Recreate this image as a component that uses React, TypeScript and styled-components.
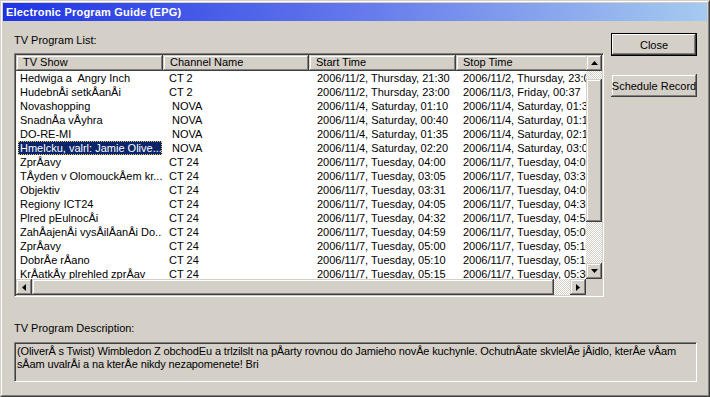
import React from 'react';
import styled, { createGlobalStyle, css } from 'styled-components';

const GlobalStyle = createGlobalStyle`
  html, body { margin: 0; padding: 0; background: #d4d0c8; }
  body { font-family: "Liberation Sans", Arial, sans-serif; font-size: 11px; color: #000; }
  * { box-sizing: border-box; }
`;

const raised = css`
  background: #d4d0c8;
  box-shadow: inset -1px -1px #404040, inset 1px 1px #d4d0c8, inset -2px -2px #808080, inset 2px 2px #ffffff;
`;

const Window = styled.div`
  width: 710px;
  height: 397px;
  background: #d4d0c8;
  border-style: solid;
  border-width: 1px;
  border-color: #d4d0c8 #404040 #404040 #d4d0c8;
  display: flex;
`;

const Frame = styled.div`
  flex: 1;
  display: flex;
  flex-direction: column;
  border-style: solid;
  border-width: 1px;
  border-color: #ffffff #808080 #808080 #ffffff;
  padding: 1px;
`;

const TitleBar = styled.div`
  height: 18px;
  flex: none;
  background: linear-gradient(90deg, #1f33e4 0%, #6478ec 50%, #a6caf0 100%);
  color: #fff;
  font-weight: bold;
  font-size: 11px;
  letter-spacing: 0.2px;
  line-height: 18px;
  padding-left: 3px;
  white-space: nowrap;
`;

const Body = styled.div`
  flex: 1;
  display: flex;
  flex-direction: column;
  padding: 0 10px 0 11px;
`;

const TopRow = styled.div`
  display: flex;
  gap: 7px;
`;

const LeftCol = styled.div`
  width: 590px;
  display: flex;
  flex-direction: column;
`;

const RightCol = styled.div`
  width: 86px;
  display: flex;
  flex-direction: column;
`;

const Label = styled.div<{ $top: number }>`
  margin-top: ${p => p.$top}px;
  line-height: 14px;
  height: 14px;
  white-space: nowrap;
`;

const Button = styled.button<{ $default?: boolean; $top: number }>`
  margin-top: ${p => p.$top}px;
  height: 23px;
  width: 86px;
  padding: 0;
  font-family: "Liberation Sans", Arial, sans-serif;
  font-size: 11px;
  color: #000;
  border: none;
  white-space: nowrap;
  ${raised};
  ${p => p.$default && css`
    box-shadow: inset 0 0 0 1px #000, inset -2px -2px #404040, inset 2px 2px #ffffff, inset -3px -3px #808080;
  `}
`;

const ListFrame = styled.div`
  margin-top: 6px;
  width: 590px;
  height: 244px;
  border-style: solid;
  border-width: 1px;
  border-color: #808080 #ffffff #ffffff #808080;
  box-shadow: inset 1px 1px #404040, inset -1px -1px #d4d0c8;
  padding: 1px;
  background: #fff;
  display: grid;
  grid-template-columns: 570px 16px;
  grid-template-rows: 224px 16px;
`;

const ListContent = styled.div`
  overflow: hidden;
  background: #fff;
`;

const HeaderRow = styled.div`
  display: flex;
  height: 16px;
  width: 600px;
`;

const HeaderCell = styled.div<{ $w: number }>`
  flex: none;
  width: ${p => p.$w}px;
  height: 16px;
  line-height: 15px;
  padding-left: 7px;
  white-space: nowrap;
  overflow: hidden;
  ${raised};
`;

const Row = styled.div`
  display: flex;
  height: 14px;
  line-height: 14px;
  width: 600px;
`;

const Cell = styled.div<{ $w: number; $pad: number }>`
  flex: none;
  width: ${p => p.$w}px;
  padding-left: ${p => p.$pad}px;
  white-space: pre;
  overflow: hidden;
`;

const ShowText = styled.span<{ $selected?: boolean }>`
  display: block;
  width: 144px;
  height: 14px;
  padding-left: 2px;
  white-space: pre;
  overflow: hidden;
  ${p => p.$selected && css`
    background: #0a246a;
    color: #fff;
    outline: 1px dotted #e8c060;
    outline-offset: -1px;
  `}
`;

const ScrollV = styled.div`
  display: flex;
  flex-direction: column;
`;

const ScrollH = styled.div`
  display: flex;
`;

const Track = styled.div<{ $size?: number }>`
  flex: ${p => (p.$size ? `none` : '1')};
  ${p => p.$size !== undefined && css`flex-basis: ${p.$size}px;`}
  background-color: #fff;
  background-image: repeating-conic-gradient(#d4d0c8 0 25%, #ffffff 0 50%);
  background-size: 2px 2px;
`;

const Thumb = styled.div<{ $size: number; $horizontal?: boolean }>`
  flex: none;
  ${p => (p.$horizontal ? css`width: ${p.$size}px;` : css`height: ${p.$size}px;`)}
  ${raised};
`;

const ArrowButton = styled.div`
  flex: none;
  width: 16px;
  height: 16px;
  display: flex;
  align-items: center;
  justify-content: center;
  ${raised};
`;

const Corner = styled.div`
  background: #d4d0c8;
`;

const DescBox = styled.div`
  margin-top: 7px;
  width: 683px;
  height: 40px;
  border-style: solid;
  border-width: 1px;
  border-color: #808080 #ffffff #ffffff #808080;
  box-shadow: inset 1px 1px #404040, inset -1px -1px #d4d0c8;
  padding: 2px 2px 0 2px;
  line-height: 13px;
  letter-spacing: -0.14px;
`;

const DescLine = styled.div`
  white-space: pre;
`;

type Dir = 'up' | 'down' | 'left' | 'right';
const Arrow = ({ dir }: { dir: Dir }) => {
  const pts: Record<Dir, string> = {
    up: '3.5,0 7,4 0,4',
    down: '0,0 7,0 3.5,4',
    left: '4,0 4,7 0,3.5',
    right: '0,0 4,3.5 0,7',
  };
  const vertical = dir === 'up' || dir === 'down';
  return (
    <svg width={vertical ? 7 : 4} height={vertical ? 4 : 7} viewBox={vertical ? '0 0 7 4' : '0 0 4 7'}>
      <polygon points={pts[dir]} fill="#000" />
    </svg>
  );
};

const COLS = [
  { title: 'TV Show', w: 147 },
  { title: 'Channel Name', w: 146 },
  { title: 'Start Time', w: 147 },
  { title: 'Stop Time', w: 160 },
];

const rows: [string, string, string, string][] = [
  ['Hedwiga a\u00a0 Angry Inch', 'CT 2', '2006/11/2, Thursday, 21:30', '2006/11/2, Thursday, 23:00'],
  ['HudebnÅi setkÅanÅi', 'CT 2', '2006/11/2, Thursday, 23:00', '2006/11/3, Friday, 00:37'],
  ['Novashopping', ' NOVA', '2006/11/4, Saturday, 01:10', '2006/11/4, Saturday, 01:35'],
  ['SnadnÅa vÅyhra', ' NOVA', '2006/11/4, Saturday, 00:40', '2006/11/4, Saturday, 01:10'],
  ['DO-RE-MI', ' NOVA', '2006/11/4, Saturday, 01:35', '2006/11/4, Saturday, 02:15'],
  ['Hmelcku, valrl: Jamie Olive...', ' NOVA', '2006/11/4, Saturday, 02:20', '2006/11/4, Saturday, 03:00'],
  ['ZprÅavy', 'CT 24', '2006/11/7, Tuesday, 04:00', '2006/11/7, Tuesday, 04:05'],
  ['TÅyden v OlomouckÅem kr...', 'CT 24', '2006/11/7, Tuesday, 03:05', '2006/11/7, Tuesday, 03:31'],
  ['Objektiv', 'CT 24', '2006/11/7, Tuesday, 03:31', '2006/11/7, Tuesday, 04:00'],
  ['Regiony ICT24', 'CT 24', '2006/11/7, Tuesday, 04:05', '2006/11/7, Tuesday, 04:32'],
  ['Plred pEulnocÅi', 'CT 24', '2006/11/7, Tuesday, 04:32', '2006/11/7, Tuesday, 04:59'],
  ['ZahÅajenÅi vysÅilÅanÅi Do...', 'CT 24', '2006/11/7, Tuesday, 04:59', '2006/11/7, Tuesday, 05:00'],
  ['ZprÅavy', 'CT 24', '2006/11/7, Tuesday, 05:00', '2006/11/7, Tuesday, 05:10'],
  ['DobrÅe rÅano', 'CT 24', '2006/11/7, Tuesday, 05:10', '2006/11/7, Tuesday, 05:15'],
  ['KrÅatkÅy plrehled zprÅav', 'CT 24', '2006/11/7, Tuesday, 05:15', '2006/11/7, Tuesday, 05:30'],
];

const SELECTED = 5;

export default function App() {
  return (
    <>
      <GlobalStyle />
      <Window>
        <Frame>
          <TitleBar>Electronic Program Guide (EPG)</TitleBar>
          <Body>
            <TopRow>
              <LeftCol>
                <Label $top={12}>TV Program List:</Label>
                <ListFrame>
                  <ListContent>
                    <HeaderRow>
                      {COLS.map(c => (
                        <HeaderCell key={c.title} $w={c.w}>{c.title}</HeaderCell>
                      ))}
                    </HeaderRow>
                    {rows.map((r, i) => (
                      <Row key={i}>
                        <Cell $w={147} $pad={2}>
                          <ShowText $selected={i === SELECTED}>{r[0]}</ShowText>
                        </Cell>
                        <Cell $w={146} $pad={6}>{r[1]}</Cell>
                        <Cell $w={147} $pad={8}>{r[2]}</Cell>
                        <Cell $w={160} $pad={7}>{r[3]}</Cell>
                      </Row>
                    ))}
                  </ListContent>
                  <ScrollV>
                    <ArrowButton><Arrow dir="up" /></ArrowButton>
                    <Track $size={8} />
                    <Thumb $size={143} />
                    <Track />
                    <ArrowButton><Arrow dir="down" /></ArrowButton>
                  </ScrollV>
                  <ScrollH>
                    <ArrowButton><Arrow dir="left" /></ArrowButton>
                    <Thumb $size={522} $horizontal />
                    <Track />
                    <ArrowButton><Arrow dir="right" /></ArrowButton>
                  </ScrollH>
                  <Corner />
                </ListFrame>
              </LeftCol>
              <RightCol>
                <Button $default $top={12}>Close</Button>
                <Button $top={18}>Schedule Record</Button>
              </RightCol>
            </TopRow>
            <Label $top={24}>TV Program Description:</Label>
            <DescBox>
              <DescLine>(OliverÅ s Twist) Wimbledon Z obchodEu a trlzilslt na pÅarty rovnou do Jamieho novÅe kuchynle. OchutnÅate skvlelÅe jÅidlo, kterÅe vÅam</DescLine>
              <DescLine>sÅam uvalrÅi a na kterÅe nikdy nezapomenete! Bri</DescLine>
            </DescBox>
          </Body>
        </Frame>
      </Window>
    </>
  );
}
